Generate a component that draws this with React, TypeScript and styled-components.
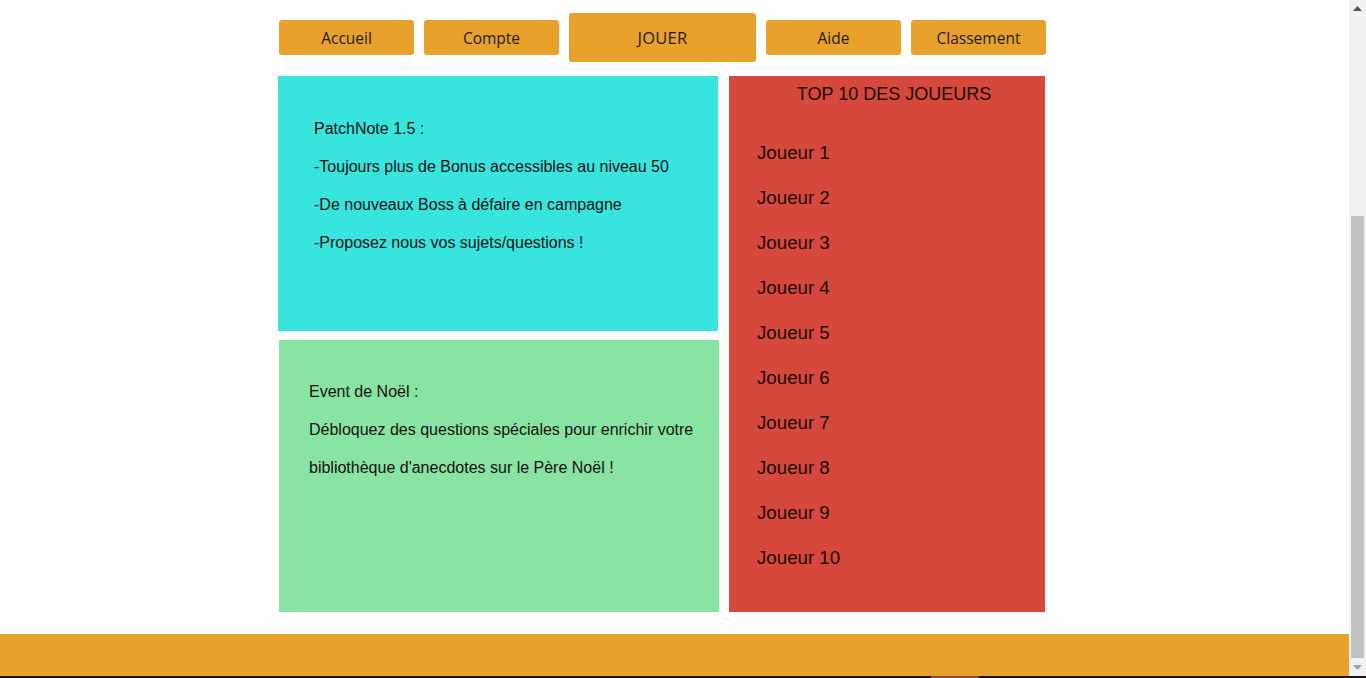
import React from "react";
import styled, { createGlobalStyle } from "styled-components";

const Global = createGlobalStyle`
  html, body {
    margin: 0;
    overflow: hidden;
  }
  body {
    background: #ffffff;
    font-family: "Liberation Sans", Arial, sans-serif;
    color: #111;
  }
`;

const Screen = styled.div`
  display: flex;
  flex-direction: column;
  width: 1366px;
  height: 678px;
`;

const Window = styled.div`
  display: flex;
  height: 676px;
`;

const Content = styled.div`
  flex: 1;
  display: flex;
  flex-direction: column;
`;

const Rail = styled.div`
  width: 17px;
  display: flex;
  flex-direction: column;
  background: #f1f1f1;
`;

const ArrowButton = styled.div`
  height: 17px;
  display: flex;
  align-items: center;
  justify-content: center;
`;

const RailGap = styled.div<{ $h: number }>`
  height: ${(p) => p.$h}px;
`;

const Thumb = styled.div`
  height: 442px;
  margin: 0 2px;
  background: #c1c1c1;
`;

const Nav = styled.nav`
  display: flex;
  align-items: center;
  gap: 10px;
  padding: 13px 0 0 279px;
  height: 49px;
`;

const NavButton = styled.button<{ $main?: boolean }>`
  width: ${(p) => (p.$main ? "187px" : "135px")};
  height: ${(p) => (p.$main ? "49px" : "35px")};
  border: none;
  border-radius: 3px;
  background: #e8a12b;
  color: #1e1a14;
  font-family: "Open Sans", "Noto Sans", sans-serif;
  font-size: ${(p) => (p.$main ? "16.5px" : "15.5px")};
  letter-spacing: ${(p) => (p.$main ? "0.3px" : "0")};
  padding: ${(p) => (p.$main ? "0 0 1px" : "1px 0 0")};
  cursor: pointer;
`;

const Main = styled.main`
  display: grid;
  grid-template-columns: 441px 316px;
  column-gap: 10px;
  margin: 14px 0 0 278px;
  width: 767px;
`;

const LeftColumn = styled.div`
  display: flex;
  flex-direction: column;
  gap: 9px;
`;

const InfoPanel = styled.section<{ $bg: string; $h: number; $pl: number; $pt: number; $shift: number }>`
  box-sizing: border-box;
  width: 440px;
  height: ${(p) => p.$h}px;
  margin-left: ${(p) => p.$shift}px;
  background: ${(p) => p.$bg};
  padding: ${(p) => p.$pt}px 20px 0 ${(p) => p.$pl}px;
  font-size: 16px;
  line-height: 38px;
  color: #111;
`;

const Line = styled.p`
  margin: 0;
`;

const RankPanel = styled.aside`
  box-sizing: border-box;
  height: 536px;
  background: #d6483b;
  padding-top: 8px;
  color: #1a0806;
`;

const RankTitle = styled.h2`
  margin: 0;
  padding-left: 14px;
  font-size: 18px;
  line-height: 21px;
  font-weight: normal;
  text-align: center;
`;

const RankList = styled.ol`
  list-style: none;
  margin: 0;
  padding: 25px 0 0 28px;
`;

const RankItem = styled.li`
  font-size: 18.7px;
  line-height: 45px;
`;

const Footer = styled.footer`
  margin-top: 22px;
  height: 42px;
  background: #e8a12b;
`;

const BottomStrip = styled.div`
  height: 2px;
  background: #1d1411;
  display: flex;
  padding-left: 931px;
`;

const StripMark = styled.span`
  width: 48px;
  background: #8f4a3a;
`;

const Arrow = ({ up, color }: { up?: boolean; color: string }) => (
  <svg width="9" height="5" viewBox="0 0 9 5">
    <path d={up ? "M0 5 L4.5 0 L9 5 Z" : "M0 0 L4.5 5 L9 0 Z"} fill={color} />
  </svg>
);

const navItems = ["Accueil", "Compte", "JOUER", "Aide", "Classement"];

export default function App() {
  return (
    <Screen>
      <Global />
      <Window>
        <Content>
          <Nav>
            {navItems.map((n) => (
              <NavButton key={n} $main={n === "JOUER"}>
                {n}
              </NavButton>
            ))}
          </Nav>
          <Main>
            <LeftColumn>
              <InfoPanel $bg="#37e5de" $h={255} $pl={36} $pt={34} $shift={0}>
                <Line>PatchNote 1.5 :</Line>
                <Line>-Toujours plus de Bonus accessibles au niveau 50</Line>
                <Line>-De nouveaux Boss à défaire en campagne</Line>
                <Line>-Proposez nous vos sujets/questions !</Line>
              </InfoPanel>
              <InfoPanel $bg="#89e3a2" $h={272} $pl={30} $pt={33} $shift={1}>
                <Line>Event de Noël :</Line>
                <Line>
                  Débloquez des questions spéciales pour enrichir votre
                  bibliothèque d'anecdotes sur le Père Noël !
                </Line>
              </InfoPanel>
            </LeftColumn>
            <RankPanel>
              <RankTitle>TOP 10 DES JOUEURS</RankTitle>
              <RankList>
                {Array.from({ length: 10 }, (_, i) => (
                  <RankItem key={i}>Joueur {i + 1}</RankItem>
                ))}
              </RankList>
            </RankPanel>
          </Main>
          <Footer />
        </Content>
        <Rail>
          <ArrowButton>
            <Arrow up color="#505050" />
          </ArrowButton>
          <RailGap $h={199} />
          <Thumb />
          <RailGap $h={1} />
          <ArrowButton>
            <Arrow color="#a3a3a3" />
          </ArrowButton>
        </Rail>
      </Window>
      <BottomStrip>
        <StripMark />
      </BottomStrip>
    </Screen>
  );
}
